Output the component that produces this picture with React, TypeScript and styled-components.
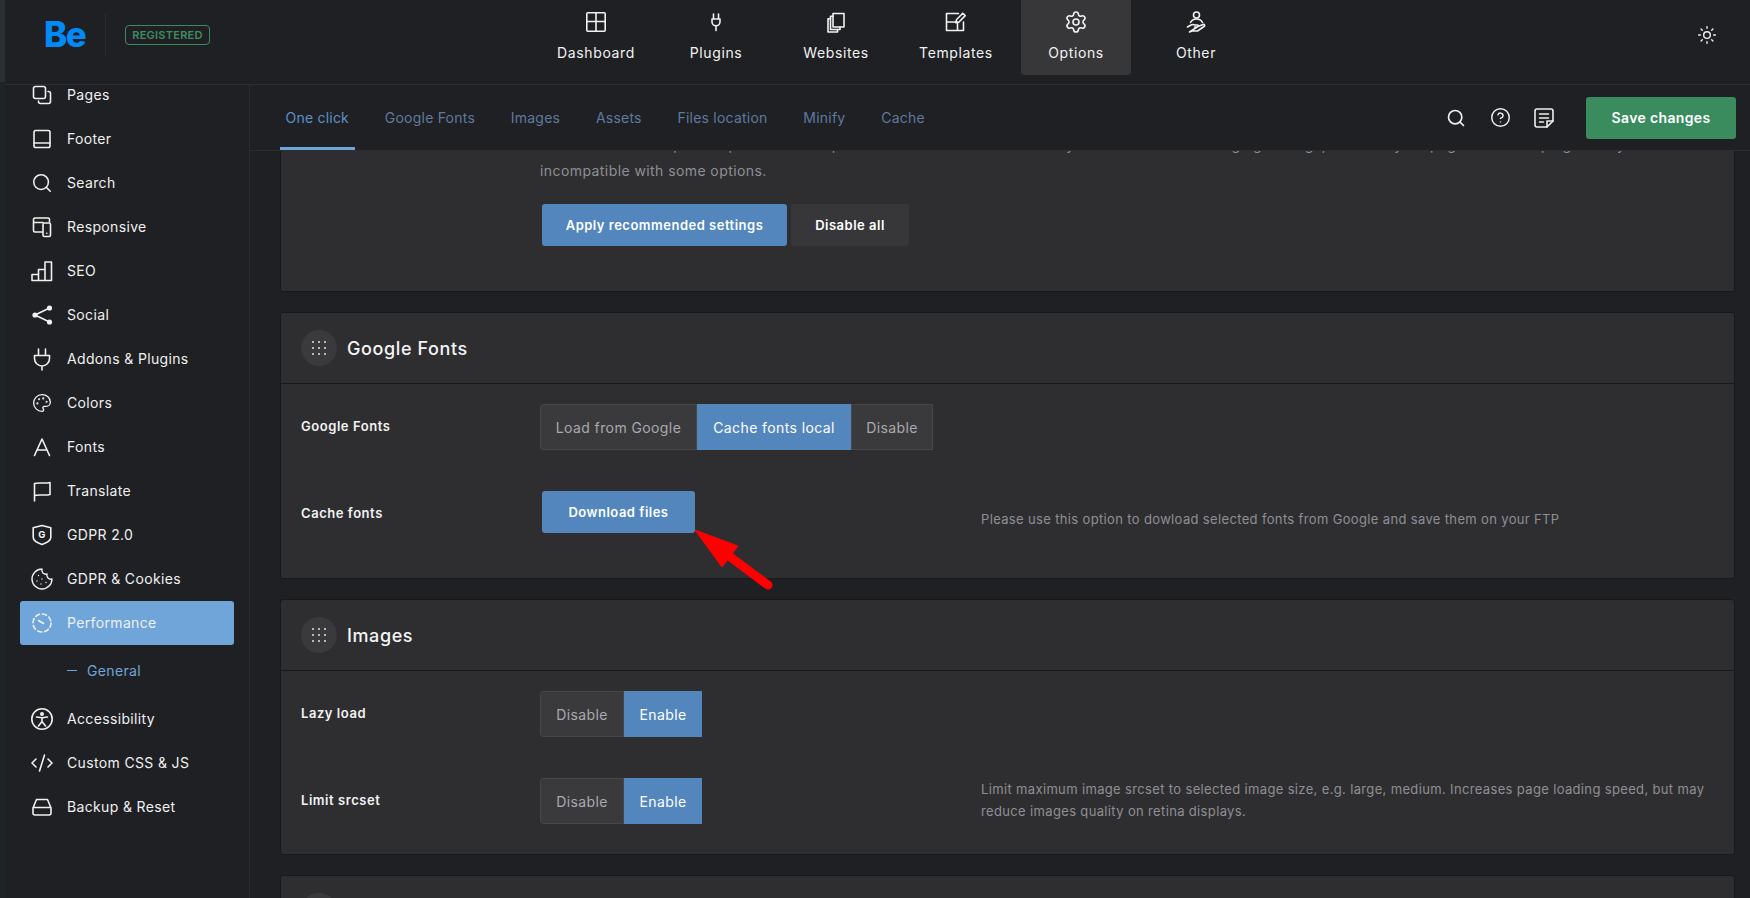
import React from "react";
import styled, { createGlobalStyle } from "styled-components";
import { Settings, Sun, Search, CircleHelp, Palette, Cookie, CodeXml } from "lucide-react";

const Global = createGlobalStyle`
  html, body { margin: 0; padding: 0; background: #1f2023; }
  * { box-sizing: border-box; }
  body { font-family: "Inter", "Noto Sans", "Liberation Sans", sans-serif; color: #eee; }
`;

const Shell = styled.div`
  position: relative; display: flex; width: 1750px; height: 898px; overflow: hidden; background: #1f2023;
`;
const EdgeStrip = styled.div`
  flex: 0 0 5px; height: 100%; background: linear-gradient(#2a3135 0 82px, #1e2529 82px);
`;
const Column = styled.div`
  flex: 1; min-width: 0; display: flex; flex-direction: column;
`;
const Header = styled.header`
  flex: 0 0 85px; display: flex; align-items: flex-start; border-bottom: 1px solid #2c2d30;
`;
const Brand = styled.div`
  flex: 0 0 536px; height: 70px; display: flex; align-items: center; padding-left: 40px;
`;
const Logo = styled.div`
  width: 40px; font-size: 35px; font-weight: 800; letter-spacing: -1.6px; color: #0089f7; line-height: 1; margin: -2px 0 0 -1px;
`;
const BrandRule = styled.div`
  width: 1px; height: 42px; background: #2b2c2f; margin: 0 19px 0 21px;
`;
const Badge = styled.div`
  width: 85px; height: 20px; display: flex; align-items: center; justify-content: center; border: 1px solid #3a8a5d;
  border-radius: 4px; color: #3e8d61; font-size: 11px; font-weight: 600; letter-spacing: 0.25px;
`;
const Nav = styled.nav`
  display: flex; gap: 10px;
`;
const NavItem = styled.a<{ $active?: boolean }>`
  width: 110px; height: 75px; padding-top: 10px; display: flex; flex-direction: column; align-items: center; gap: 9px;
  border-radius: 0 0 4px 4px; background: ${(p) => (p.$active ? "#37373a" : "transparent")};
  color: #f2f2f2; font-size: 14px; line-height: 20px; letter-spacing: 0.62px;
`;
const ThemeToggle = styled.div`
  margin-left: auto; margin-right: 33px; margin-top: 25px; height: 20px; color: #eee;
`;
const Body = styled.div`
  flex: 1; min-height: 0; display: flex;
`;
const Sidebar = styled.aside`
  flex: 0 0 245px; border-right: 1px solid #2a2b2e; padding-left: 15px; overflow: hidden;
`;
const SideList = styled.div`
  margin-top: -12px; width: 214px; display: flex; flex-direction: column;
`;
const SideItem = styled.a<{ $active?: boolean }>`
  height: 44px; display: flex; align-items: center; gap: 13px; padding: 0 0 1px 10px; border-radius: 3px;
  font-size: 14px; letter-spacing: 0.35px; color: #f0f0f0;
  background: ${(p) => (p.$active ? "#6fa5d8" : "transparent")};
`;
const SideSub = styled.a`
  height: 52px; display: flex; align-items: center; gap: 10px; padding: 0 0 1px 47px;
  font-size: 14px; letter-spacing: 0.35px; color: #6fa5d8;
  &::before { content: ""; width: 10px; height: 1px; background: #6fa5d8; }
`;
const Main = styled.main`
  flex: 1; min-width: 0; display: flex; flex-direction: column;
`;
const SubBar = styled.div`
  flex: 0 0 66px; display: flex; align-items: center; padding: 0 14px 0 30px; border-bottom: 1px solid #2c2d30;
`;
const Tabs = styled.div`
  display: flex; gap: 24.8px; height: 100%;
`;
const Tab = styled.a<{ $active?: boolean }>`
  padding: 0 5.5px; display: flex; align-items: center; font-size: 14px; letter-spacing: 0.22px;
  color: ${(p) => (p.$active ? "#5c90ca" : "#5e7a9f")};
  box-shadow: ${(p) => (p.$active ? "inset 0 -3px 0 #6fa5d8" : "none")};
  border-radius: 2px 2px 0 0;
`;
const Actions = styled.div`
  margin-left: auto; display: flex; align-items: center; gap: 20px; color: #eee;
`;
const ActionIcon = styled.span`
  width: 24px; height: 24px; display: flex; align-items: center; justify-content: center;
`;
const SaveButton = styled.button`
  width: 150px; height: 42px; margin-left: 10px; border: 0; border-radius: 3px; background: #3a8c5e; color: #fff;
  font: 600 14px "Inter", sans-serif; letter-spacing: 0.35px;
`;
const Content = styled.div`
  flex: 1; min-height: 0; overflow: hidden; padding: 0 15px 0 30px; display: flex; flex-direction: column; gap: 20px;
`;
const Card = styled.section<{ $scrolled?: boolean }>`
  flex: none; background: #2e2e31; border: 1px solid #19191b; border-radius: 3px;
  margin-top: ${(p) => (p.$scrolled ? "-39px" : "0")};
`;
const CardHead = styled.div`
  height: 71px; display: flex; align-items: center; gap: 10px; padding-left: 20px; border-bottom: 1px solid #19191b;
`;
const Handle = styled.div`
  width: 36px; height: 36px; border-radius: 50%; background: #3a3a3d; display: flex; align-items: center; justify-content: center;
`;
const CardTitle = styled.h3`
  margin: 0; font-size: 18px; font-weight: 500; letter-spacing: 0.6px; color: #f4f4f4;
`;
const Row = styled.div<{ $bottom?: number }>`
  display: grid; grid-template-columns: 239px 441px 1fr; align-items: start;
  padding: 20px 20px ${(p) => p.$bottom ?? 21}px 20px;
`;
const Label = styled.div`
  font-size: 13px; font-weight: 600; line-height: 44px; letter-spacing: 0.55px; color: #f2f2f2;
`;
const Seg = styled.div`
  display: inline-flex; height: 46px; border-radius: 4px; overflow: hidden;
`;
const SegItem = styled.div<{ $on?: boolean; $w: number }>`
  width: ${(p) => p.$w}px; display: flex; align-items: center; justify-content: center; font-size: 14px; letter-spacing: 0.4px;
  background: ${(p) => (p.$on ? "#5286bd" : "#3a3a3d")};
  color: ${(p) => (p.$on ? "#fff" : "#a9a9ad")};
  border: ${(p) => (p.$on ? "0" : "1px solid #47474a")};
`;
const Btn = styled.button<{ $ghost?: boolean; $w: number }>`
  width: ${(p) => p.$w}px; height: 42px; border: 0; border-radius: 3px;
  background: ${(p) => (p.$ghost ? "#37373a" : "#5286bd")}; color: #fff;
  font: 600 13px "Inter", sans-serif; letter-spacing: 0.5px;
`;
const BtnRow = styled.div`
  display: flex; gap: 4px; margin: 20px 0 0 2px;
`;
const Solo = styled.div`
  display: flex; padding-left: 2px;
`;
const Desc = styled.div<{ $inset?: boolean }>`
  font-size: 13px; line-height: 22px; color: #8f8f93; letter-spacing: 0.35px;
  padding-top: ${(p) => (p.$inset ? "17px" : "0")};
`;
const IntroDesc = styled(Desc)`
  font-size: 14px; line-height: 26px; letter-spacing: 0.42px; white-space: nowrap;
`;
const IntroBody = styled.div`
  padding: 19px 20px 45px 259px;
`;
const ArrowMark = styled.svg`
  position: absolute; left: 690px; top: 525px; pointer-events: none;
`;
const Icon = styled.svg.attrs({ viewBox: "0 0 24 24", fill: "none", stroke: "currentColor", strokeWidth: 1.6, strokeLinecap: "round", strokeLinejoin: "round" })`
  width: 24px; height: 24px; flex: none; display: block;
`;
const IconLetter = styled.text`
  font: 700 9.5px "Inter", sans-serif; fill: currentColor; stroke: none; text-anchor: middle;
`;
const PaletteIcon = styled(Palette)`
  margin: 0 2px; flex: none;
`;
const FindIcon = styled(Search)`
  margin: 0 1px; flex: none;
`;

const Ic = {
  Dash: () => <Icon><rect x="2.8" y="2.8" width="18.4" height="18.4" rx="1" /><path d="M12 2.8v18.4M2.8 11.5h18.4" /></Icon>,
  Plug: () => <Icon><path d="M9.5 4v5M14.5 4v5M8 9h8v2.8a4 4 0 0 1-8 0zM12 15.8V20.5" /></Icon>,
  SidePlug: () => <Icon strokeWidth={1.7}><path d="M8.5 2v6.5M15.5 2v6.5M4.5 8.5h15v3a7.5 7.5 0 0 1-15 0zM12 19v4" /></Icon>,
  Copies: () => <Icon><path d="M9 3.5h11v13.5H9z" /><path d="M9 6.2H6.5V19.5H16V17" /><path d="M6.5 8.8H4V22h9.5v-2.5" /></Icon>,
  Tmpl: () => <Icon><path d="M19.5 12v8.5h-17v-17h12M2.5 12h11v8.5" /><path d="M18.8 3.2l2.4 2.4-6.4 6.6-3 .6.6-3z" /></Icon>,
  Gear: () => <Settings size={24} strokeWidth={1.6} />,
  Other: () => <Icon strokeWidth={1.5}><circle cx="12.5" cy="5" r="3" /><path d="M6.500 12.500c1-2 3.500-3.500 6-3.500s5 1.500 6 3.500" /><path d="M3.500 17l3.500-2c1.500-.7 3-.5 4 0h2.500c1.200 0 1.200 2 0 2h-3M14 16.500l5-2c1.600-.5 2.200 1.300 1 2l-6.500 4.500H8l-2.500 1z" /></Icon>,
  Pages: () => <Icon><rect x="3.5" y="3.5" width="12" height="12" rx="2" /><path d="M18 8.500h.5a2 2 0 0 1 2 2v8a2 2 0 0 1-2 2h-8a2 2 0 0 1-2-2V18" /></Icon>,
  Footer: () => <Icon><rect x="4" y="3.500" width="16" height="17" rx="1.800" /><path d="M4 16h16" /></Icon>,
  Find: () => <FindIcon size={22} strokeWidth={1.7} />,
  Resp: () => <Icon><path d="M12.500 17H5a1.500 1.500 0 0 1-1.500-1.500v-11A1.500 1.500 0 0 1 5 3h13a1.500 1.500 0 0 1 1.500 1.500V7M3.500 7.500H13" /><rect x="13" y="8" width="7.500" height="13.500" rx="1.400" /><path d="M16.700 18.200h.1" /></Icon>,
  Seo: () => <Icon><path d="M2 21.500v-6h6.500v6zM8.500 21.500v-11H15v11zM15 21.500V3h6.500v18.500zM2 21.500h19.500" /></Icon>,
  Social: () => <Icon><path d="M19.500 5L5 12l14.500 7" /><circle cx="19.500" cy="5" r="1.800" fill="currentColor" /><circle cx="19.500" cy="19" r="1.800" fill="currentColor" /><circle cx="5" cy="12" r="1.800" fill="currentColor" /></Icon>,
  Colors: () => <PaletteIcon size={20} strokeWidth={1.6} />,
  Fonts: () => <Icon><path d="M4.500 20.500L12 4l7.500 16.500M7 15h10" /></Icon>,
  Flag: () => <Icon><path d="M4.500 22V4.500c5-1.500 10 .5 15.500-1v12c-5.500 1.500-10.500-.5-15.500 1" /></Icon>,
  Shield: () => <Icon><path d="M12 2.500l8.800 2.300v9.400c0 3-4.400 5.800-8.800 7.300-4.400-1.500-8.800-4.300-8.800-7.300V4.800z" /><IconLetter x="12" y="15.300">G</IconLetter></Icon>,
  Cookie: () => <Cookie size={24} strokeWidth={1.4} />,
  Perf: () => <Icon strokeWidth={2}><circle cx="12" cy="12" r="9" strokeDasharray="4.200 2.900" /><path d="M8.500 9.500l5 3" /></Icon>,
  Access: () => <Icon strokeWidth={1.900}><circle cx="12" cy="12" r="10.200" /><circle cx="12" cy="7" r="1.200" fill="currentColor" /><path d="M6.500 10l5.500.8 5.500-.8M12 11v3.500M12 14.500l-3.500 4.500M12 14.500l3.500 4.500" /></Icon>,
  Code: () => <CodeXml size={24} strokeWidth={1.6} />,
  Drive: () => <Icon><path d="M6.500 4.500h11L21 13v5a2 2 0 0 1-2 2H5a2 2 0 0 1-2-2v-5zM3 12.500h18" /></Icon>,
  Note: () => <Icon strokeWidth={1.800}><path d="M21 15V5a2 2 0 0 0-2-2H5a2 2 0 0 0-2 2v14a2 2 0 0 0 2 2h10z" /><path d="M15 21v-6h6M7.500 8h9M7.500 12h9M7.500 16h4" /></Icon>,
};

const Grip = () => (
  <svg width="14" height="14" viewBox="0 0 14 14" fill="#e2e2e2">
    {[1, 7, 13].flatMap((y) => [1, 7, 13].map((x) => <circle key={`${x}-${y}`} cx={x} cy={y} r="1" />))}
  </svg>
);

const navItems: [string, () => React.ReactElement, boolean?][] = [
  ["Dashboard", Ic.Dash], ["Plugins", Ic.Plug], ["Websites", Ic.Copies],
  ["Templates", Ic.Tmpl], ["Options", Ic.Gear, true], ["Other", Ic.Other],
];
const sideTop: [string, () => React.ReactElement][] = [
  ["Pages", Ic.Pages], ["Footer", Ic.Footer], ["Search", Ic.Find], ["Responsive", Ic.Resp], ["SEO", Ic.Seo],
  ["Social", Ic.Social], ["Addons & Plugins", Ic.SidePlug], ["Colors", Ic.Colors], ["Fonts", Ic.Fonts],
  ["Translate", Ic.Flag], ["GDPR 2.0", Ic.Shield], ["GDPR & Cookies", Ic.Cookie],
];
const sideBottom: [string, () => React.ReactElement][] = [
  ["Accessibility", Ic.Access], ["Custom CSS & JS", Ic.Code], ["Backup & Reset", Ic.Drive],
];
const tabs = ["One click", "Google Fonts", "Images", "Assets", "Files location", "Minify", "Cache"];

const Toggle = () => (
  <Seg>
    <SegItem $w={84}>Disable</SegItem>
    <SegItem $w={78} $on>Enable</SegItem>
  </Seg>
);

export default function App() {
  return (
    <Shell>
      <Global />
      <EdgeStrip />
      <Column>
        <Header>
          <Brand>
            <Logo>Be</Logo>
            <BrandRule />
            <Badge>REGISTERED</Badge>
          </Brand>
          <Nav>
            {navItems.map(([name, I, on]) => (
              <NavItem key={name} $active={on}><I />{name}</NavItem>
            ))}
          </Nav>
          <ThemeToggle><Sun size={20} strokeWidth={1.7} /></ThemeToggle>
        </Header>
        <Body>
          <Sidebar>
            <SideList>
              {sideTop.map(([name, I]) => (
                <SideItem key={name}><I />{name}</SideItem>
              ))}
              <SideItem $active><Ic.Perf />Performance</SideItem>
              <SideSub>General</SideSub>
              {sideBottom.map(([name, I]) => (
                <SideItem key={name}><I />{name}</SideItem>
              ))}
            </SideList>
          </Sidebar>
          <Main>
            <SubBar>
              <Tabs>
                {tabs.map((t, i) => <Tab key={t} $active={i === 0}>{t}</Tab>)}
              </Tabs>
              <Actions>
                <ActionIcon><Search size={20} strokeWidth={2} /></ActionIcon>
                <ActionIcon><CircleHelp size={21} strokeWidth={1.7} /></ActionIcon>
                <ActionIcon><Ic.Note /></ActionIcon>
                <SaveButton>Save changes</SaveButton>
              </Actions>
            </SubBar>
            <Content>
              <Card $scrolled>
                <IntroBody>
                  <IntroDesc>Enable the most important performance options with one click. Please test your website after changing settings, because your page builder or plugins may be<br />incompatible with some options.</IntroDesc>
                  <BtnRow>
                    <Btn $w={245}>Apply recommended settings</Btn>
                    <Btn $w={118} $ghost>Disable all</Btn>
                  </BtnRow>
                </IntroBody>
              </Card>
              <Card>
                <CardHead><Handle><Grip /></Handle><CardTitle>Google Fonts</CardTitle></CardHead>
                <Row>
                  <Label>Google Fonts</Label>
                  <Seg>
                    <SegItem $w={157}>Load from Google</SegItem>
                    <SegItem $w={154} $on>Cache fonts local</SegItem>
                    <SegItem $w={82}>Disable</SegItem>
                  </Seg>
                </Row>
                <Row $bottom={43}>
                  <Label>Cache fonts</Label>
                  <Solo><Btn $w={153}>Download files</Btn></Solo>
                  <Desc $inset>Please use this option to dowload selected fonts from Google and save them on your FTP</Desc>
                </Row>
              </Card>
              <Card>
                <CardHead><Handle><Grip /></Handle><CardTitle>Images</CardTitle></CardHead>
                <Row>
                  <Label>Lazy load</Label>
                  <Toggle />
                </Row>
                <Row $bottom={30}>
                  <Label>Limit srcset</Label>
                  <Toggle />
                  <Desc>Limit maximum image srcset to selected image size, e.g. large, medium. Increases page loading speed, but may reduce images quality on retina displays.</Desc>
                </Row>
              </Card>
              <Card>
                <CardHead><Handle><Grip /></Handle></CardHead>
              </Card>
            </Content>
          </Main>
        </Body>
      </Column>
      <ArrowMark width="90" height="70" viewBox="690 525 90 70">
        <path d="M695 530L738 546L722 567Z" fill="#f00" stroke="#f00" strokeWidth="1" strokeLinejoin="round" />
        <path d="M729 556L768 585" stroke="#f00" strokeWidth="9" strokeLinecap="round" />
      </ArrowMark>
    </Shell>
  );
}
